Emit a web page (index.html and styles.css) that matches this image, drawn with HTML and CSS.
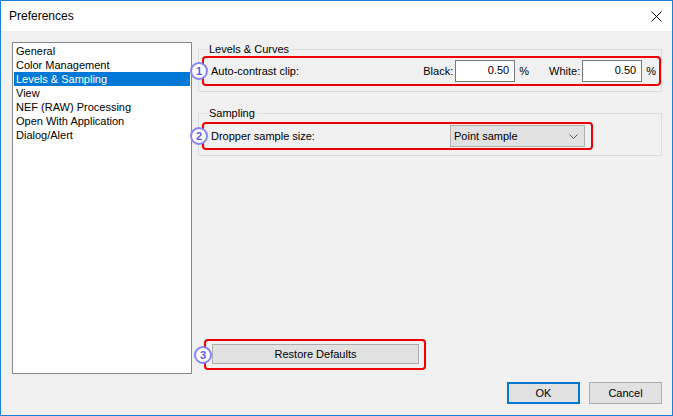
FILE: index.html
```html
<!DOCTYPE html>
<html lang="en">
<head>
  <meta charset="UTF-8">
  <meta name="viewport" content="width=device-width, initial-scale=1.0">
  <title>Preferences</title>
  <link rel="stylesheet" href="styles.css">
</head>
<body>
  <div class="window">
    <div class="titlebar">
      <span class="title">Preferences</span>
      <svg class="close" width="11" height="11" viewBox="0 0 11 11">
        <path d="M0.5 0.5 L10.5 10.5 M10.5 0.5 L0.5 10.5" stroke="#000" stroke-width="1" fill="none"/>
      </svg>
    </div>
    <div class="content">
      <div class="main">
        <ul class="list">
          <li>General</li>
          <li>Color Management</li>
          <li class="selected">Levels &amp; Sampling</li>
          <li>View</li>
          <li>NEF (RAW) Processing</li>
          <li>Open With Application</li>
          <li>Dialog/Alert</li>
        </ul>
        <div class="panel">
          <fieldset class="group group-levels">
            <legend>Levels &amp; Curves</legend>
            <div class="mark mark-levels">
              <span class="num">1</span>
              <span class="label">Auto-contrast clip:</span>
              <span class="field-label">Black:</span>
              <input class="num-input" type="text" value="0.50" readonly>
              <span class="pct">%</span>
              <span class="field-label white">White:</span>
              <input class="num-input" type="text" value="0.50" readonly>
              <span class="pct">%</span>
            </div>
          </fieldset>
          <fieldset class="group group-sampling">
            <legend>Sampling</legend>
            <div class="mark mark-sampling">
              <span class="num">2</span>
              <span class="label">Dropper sample size:</span>
              <div class="dropdown">
                <span>Point sample</span>
                <svg width="9" height="5" viewBox="0 0 9 5">
                  <path d="M0.5 0.5 L4.5 4.5 L8.5 0.5" stroke="#555" stroke-width="1" fill="none"/>
                </svg>
              </div>
            </div>
          </fieldset>
          <div class="mark mark-restore">
            <span class="num num-restore">3</span>
            <button class="btn restore">Restore Defaults</button>
          </div>
        </div>
      </div>
      <div class="footer">
        <button class="btn ok">OK</button>
        <button class="btn">Cancel</button>
      </div>
    </div>
  </div>
</body>
</html>
```

FILE: styles.css
```css
body {
  margin: 0;
  font-family: "Liberation Sans", Arial, sans-serif;
  font-size: 11px;
  color: #000;
}
.window {
  width: 673px;
  height: 416px;
  box-sizing: border-box;
  border: 1px solid #1a7fd6;
  background-color: #f0f0f0;
  display: flex;
  flex-direction: column;
}
.titlebar {
  height: 30px;
  background-color: #fff;
  display: flex;
  align-items: center;
  justify-content: space-between;
  padding: 0 10px 0 8px;
}
.title {
  font-size: 12px;
}
.content {
  flex: 1;
  display: flex;
  flex-direction: column;
  padding: 11px 10px 0 11px;
}
.main {
  display: flex;
  height: 332px;
  gap: 6px;
}
.list {
  width: 180px;
  box-sizing: border-box;
  margin: 0;
  padding: 1px;
  list-style: none;
  background-color: #fff;
  border: 1px solid #828790;
}
.list li {
  height: 14px;
  line-height: 14px;
  padding-left: 2px;
}
.list .selected {
  background-color: #0078d7;
  color: #fff;
}
.panel {
  flex: 1;
  display: flex;
  flex-direction: column;
}
.group {
  margin: 0;
  padding: 0 0 5px 3px;
  border: 1px solid #dcdcdc;
  min-width: 0;
}
.group legend {
  margin-left: 5px;
  padding: 0 2px;
  line-height: 13px;
}
.group-levels {
  margin-top: 1px;
}
.group-sampling {
  margin-top: 15px;
  padding-top: 2px;
  padding-bottom: 5px;
}
.mark {
  position: relative;
  display: flex;
  align-items: center;
  box-sizing: border-box;
  border: 2px solid #f00000;
  border-radius: 4px;
}
.num {
  position: absolute;
  left: -14px;
  top: 50%;
  margin-top: -9px;
  width: 14px;
  height: 14px;
  border: 2px solid #8484ff;
  border-radius: 50%;
  background-color: #fff;
  color: #5a5af0;
  font-size: 11px;
  font-weight: bold;
  line-height: 14px;
  text-align: center;
}
.mark-levels {
  height: 30px;
  width: 459px;
  padding: 0 3px 0 7px;
}
.label {
  flex: 1;
}
.field-label {
  margin-right: 2px;
}
.white {
  margin-left: 20px;
}
.num-input {
  width: 60px;
  height: 22px;
  box-sizing: border-box;
  border: 1px solid #7a7a7a;
  padding: 0 5px 2px 0;
  text-align: right;
  font-family: inherit;
  font-size: 11px;
  outline: none;
}
.pct {
  margin-left: 4px;
}
.mark-sampling {
  height: 28px;
  width: 391px;
  padding: 0 6px 0 7px;
}
.dropdown {
  width: 135px;
  height: 22px;
  box-sizing: border-box;
  border: 1px solid #adadad;
  background-color: #e1e1e1;
  display: flex;
  align-items: center;
  justify-content: space-between;
  padding: 0 6px 0 3px;
}
.mark-restore {
  margin: auto 0 4px 6px;
  width: 222px;
  height: 31px;
  padding: 1px 5px 2px 6px;
}
.num-restore {
  left: -12px;
}
.btn {
  height: 20px;
  box-sizing: border-box;
  border: 1px solid #adadad;
  background-color: #e1e1e1;
  font-family: inherit;
  font-size: 11px;
  color: #000;
  padding: 0;
}
.restore {
  width: 207px;
}
.footer {
  display: flex;
  justify-content: flex-end;
  gap: 9px;
  margin-top: 8px;
}
.footer .btn {
  width: 73px;
  height: 22px;
}
.footer .ok {
  border: 2px solid #0078d7;
}
```
